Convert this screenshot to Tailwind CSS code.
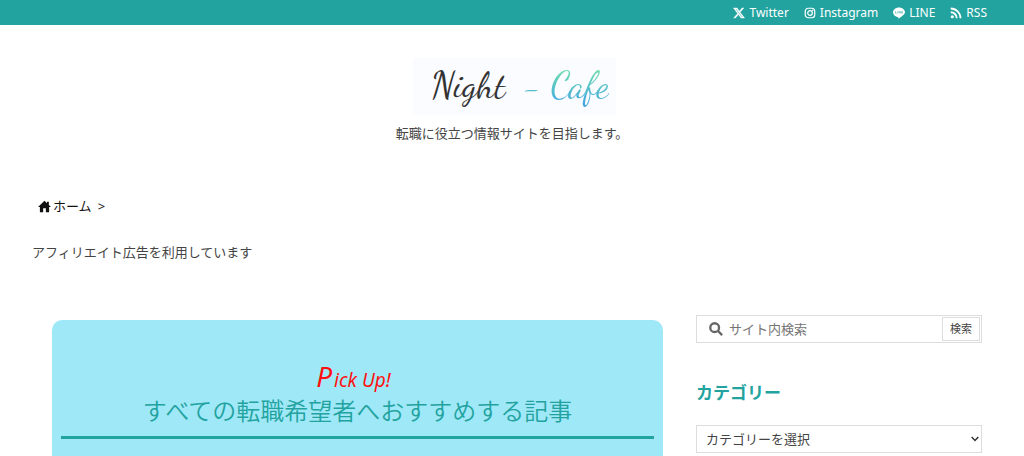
<!DOCTYPE html>
<html lang="ja">
<head>
  <meta charset="UTF-8" />
  <meta name="viewport" content="width=device-width, initial-scale=1.0" />
  <script src="https://cdn.jsdelivr.net/npm/@tailwindcss/browser@4"></script>
  <title>Night - Cafe</title>
</head>
<body class="bg-white text-[#444] text-[13px] leading-5 font-['Noto_Sans','Noto_Sans_CJK_JP',sans-serif] overflow-x-hidden">
  <!-- SNS -->
  <nav class="bg-[#22a39f] h-[25px] pr-[37px] flex items-center justify-end gap-[15px] text-white text-xs font-['Noto_Sans',sans-serif]">
    <a href="#" class="flex items-center gap-1">
      <svg class="size-3" viewBox="0 0 24 24" fill="currentColor"><path d="M18.2 2h3.400l-7.400 8.500L23 22h-6.800l-5.300-7-6.100 7H1.400l7.900-9.100L1 2h7l4.800 6.400zM17 20h1.900L6.900 3.900h-2z" stroke="currentColor" stroke-width="1"/></svg>
      Twitter
    </a>
    <a href="#" class="flex items-center gap-1">
      <svg class="size-3" viewBox="0 0 24 24" fill="none" stroke="currentColor" stroke-width="2.4"><rect x="2.500" y="2.500" width="19" height="19" rx="6"/><circle cx="12" cy="12" r="4.6"/><circle cx="17.6" cy="6.4" r="1.4" fill="currentColor" stroke="none"/></svg>
      Instagram
    </a>
    <a href="#" class="flex items-center gap-1">
      <svg class="size-3" viewBox="0 0 24 24" fill="currentColor"><path d="M12 1C5.4 1 0 5.3 0 10.7c0 4.800 4.300 8.800 10 9.600.9.2.9.7.7 1.700-.2 1 .1 1.300 1 .8 1-.4 5.600-3.200 8.900-6.800C22.900 13.900 24 12.400 24 10.700 24 5.300 18.600 1 12 1z"/><path d="M5 8.500v4h2.500M9.500 8.500v4M12 12.500v-4l3 4v-4M19.500 8.500h-2v4h2M17.500 10.500h2" fill="none" stroke="#22a39f" stroke-width="1"/></svg>
      LINE
    </a>
    <a href="#" class="flex items-center gap-1">
      <svg class="size-3" viewBox="0 0 24 24" fill="none" stroke="currentColor" stroke-width="3.6"><circle cx="4.5" cy="19.5" r="3.2" fill="currentColor" stroke="none"/><path d="M1.5 10.500a12 12 0 0 1 12 12M1.500 3a19.500 19.500 0 0 1 19.500 19.500"/></svg>
      RSS
    </a>
  </nav>

  <!-- ヘッダー -->
  <header class="pt-[33px] flex flex-col items-center">
    <a href="#" class="w-[203px] h-[57px] ml-1 pl-3 pb-1 bg-[#fbfcff] flex items-center justify-center gap-[18px] text-[37px] leading-12 font-['Dancing_Script',cursive]">
      <span class="text-[#333]">Night</span>
      <span class="bg-linear-to-b from-[#6fdcae] from-20% to-[#45a5e0] to-90% bg-clip-text text-transparent whitespace-pre">- Cafe</span>
    </a>
    <p class="mt-2">転職に役立つ情報サイトを目指します。</p>
  </header>

  <div class="px-8">
    <div class="mt-[53px] pl-[6px] flex items-center text-[#111]">
      <a href="#" class="flex items-center gap-[2px]">
        <svg class="size-[13px]" viewBox="0 0 24 24" fill="currentColor"><path d="M12 1.500L0 13h3.500v9.500h6V15h5v7.500h6V13H24l-4-3.900V3h-3.500v2.800z"/></svg>
        ホーム
      </a>
      <span class="ml-[6px]">&gt;</span>
    </div>
    <p class="mt-[26px]">アフィリエイト広告を利用しています</p>
  </div>

  <div class="mt-[53px] pl-[52px] pr-[42px] flex items-start gap-[33px]">
    <main class="flex-1 mt-[5px] px-[9px] pt-10 pb-[17px] rounded-t-[10px] bg-[#9fe8f7]">
      <h2 class="border-b-[3px] border-[#22a39f] pb-[10px] text-center text-[#22a39f] text-2xl leading-[30px] font-[350]">
        <span class="block pr-2 text-[19px] leading-8 font-normal italic text-[#f11] font-['Noto_Sans',sans-serif]"><span class="text-[28px] mr-[2px]">P</span>ick Up!</span>
        すべての転職希望者へおすすめする記事
      </h2>
    </main>

    <aside class="w-[286px]">
      <form class="h-7 border border-[#ddd] pl-3 pr-px flex items-center">
        <svg class="size-[14px] shrink-0" viewBox="0 0 24 24" fill="none" stroke="#666" stroke-width="4"><circle cx="9.7" cy="9.7" r="7.5"/><path d="M15 15l7.500 7.500"/></svg>
        <input type="search" aria-label="サイト内検索" placeholder="サイト内検索" class="flex-1 min-w-0 ml-[6px] outline-none placeholder:text-[#757575]" />
        <button type="submit" class="h-6 px-[7px] border border-[#ddd] text-[11px]">検索</button>
      </form>
      <h3 class="mt-[38px] text-[17px] leading-6 font-bold text-[#22a39f]"><label for="category">カテゴリー</label></h3>
      <div class="relative mt-5">
        <select id="category" class="appearance-none w-full h-7 border border-[#ddd] px-[9px] bg-white">
          <option>カテゴリーを選択</option>
        </select>
        <svg class="absolute right-[3px] top-[10px] size-2 pointer-events-none" viewBox="0 0 8 8" fill="none" stroke="#333" stroke-width="1.5"><path d="M.7 2L4 5.500 7.300 2"/></svg>
      </div>
    </aside>
  </div>
</body>
</html>
